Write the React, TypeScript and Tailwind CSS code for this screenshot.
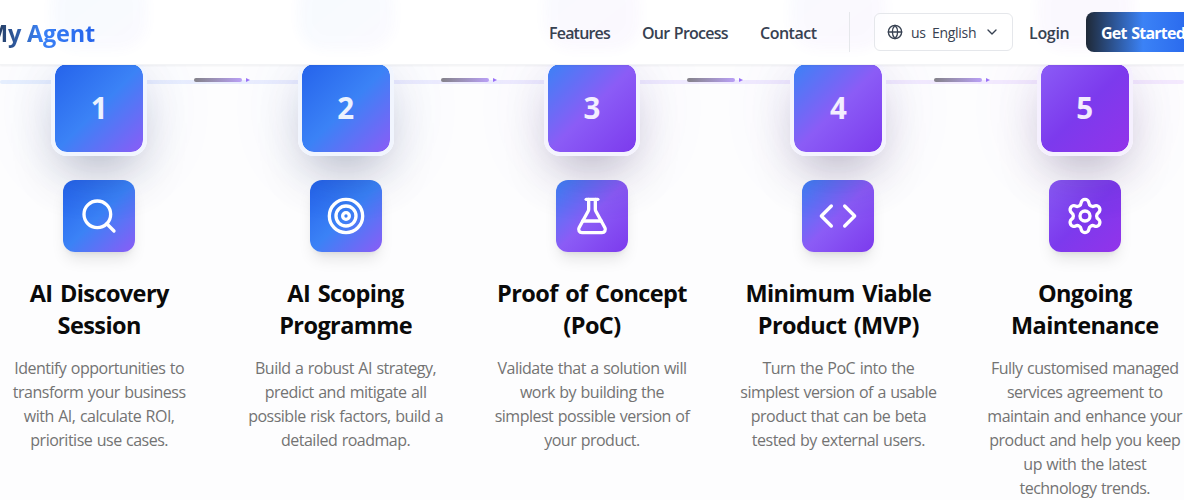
import { Search, Target, FlaskConical, Code, Settings, Globe, ChevronDown } from 'lucide-react';
import type { LucideIcon } from 'lucide-react';

type Step = {
  icon: LucideIcon;
  title: string[];
  text: string[];
  gradient: string;
  border: string;
  halo: string;
};

const steps: Step[] = [
  {
    icon: Search,
    title: ['AI Discovery', 'Session'],
    text: ['Identify opportunities to', 'transform your business', 'with AI, calculate ROI,', 'prioritise use cases.'],
    gradient: 'from-[#2563eb] via-[#3b82f6] to-[#8b5cf6]',
    border: 'border-[#f1f5fe]',
    halo: 'shadow-[0_25px_50px_-12px_rgba(15,23,60,0.3),0_0_80px_0_rgba(59,100,246,0.09)]',
  },
  {
    icon: Target,
    title: ['AI Scoping', 'Programme'],
    text: ['Build a robust AI strategy,', 'predict and mitigate all', 'possible risk factors, build a', 'detailed roadmap.'],
    gradient: 'from-[#2563eb] via-[#3b82f6] to-[#8b5cf6]',
    border: 'border-[#f1f5fe]',
    halo: 'shadow-[0_25px_50px_-12px_rgba(15,23,60,0.3),0_0_80px_0_rgba(59,100,246,0.09)]',
  },
  {
    icon: FlaskConical,
    title: ['Proof of Concept', '(PoC)'],
    text: ['Validate that a solution will', 'work by building the', 'simplest possible version of', 'your product.'],
    gradient: 'from-[#3b82f6] via-[#8b5cf6] to-[#7c3aed]',
    border: 'border-[#f4f3fe]',
    halo: 'shadow-[0_25px_50px_-12px_rgba(30,15,60,0.3),0_0_80px_0_rgba(110,80,246,0.09)]',
  },
  {
    icon: Code,
    title: ['Minimum Viable', 'Product (MVP)'],
    text: ['Turn the PoC into the', 'simplest version of a usable', 'product that can be beta', 'tested by external users.'],
    gradient: 'from-[#3b82f6] via-[#8b5cf6] to-[#7c3aed]',
    border: 'border-[#f4f3fe]',
    halo: 'shadow-[0_25px_50px_-12px_rgba(30,15,60,0.3),0_0_80px_0_rgba(110,80,246,0.09)]',
  },
  {
    icon: Settings,
    title: ['Ongoing', 'Maintenance'],
    text: ['Fully customised managed', 'services agreement to', 'maintain and enhance your', 'product and help you keep', 'up with the latest', 'technology trends.'],
    gradient: 'from-[#8b5cf6] via-[#7c3aed] to-[#9333ea]',
    border: 'border-[#f5f0fe]',
    halo: 'shadow-[0_25px_50px_-12px_rgba(30,15,60,0.3),0_0_80px_0_rgba(140,70,240,0.09)]',
  },
];

function HeaderGlow() {
  return (
    <div className="absolute inset-0 -z-10 grid grid-cols-[repeat(5,198.4px)] gap-12 overflow-hidden">
      {steps.map((step) => (
        <div key={step.title[0]} className="flex justify-center">
          <div className={`-mt-6 h-[74px] w-24 shrink-0 rounded-[28px] bg-linear-to-br/srgb opacity-[0.03] blur-[6px] ${step.gradient}`} />
        </div>
      ))}
    </div>
  );
}

function Header() {
  return (
    <header className="relative z-20 flex h-[65px] items-center border-b border-[#f3f4f6] bg-white shadow-[0_1px_2px_0_rgba(0,0,0,0.05)]">
      <HeaderGlow />
      <div className="flex w-[95px] shrink-0 justify-end pt-[3px]">
        <span className="bg-linear-to-r/srgb from-[#1f2937] via-[#3b82f6] to-[#2563eb] bg-clip-text text-[23.5px] font-bold tracking-[-0.2px] whitespace-nowrap text-transparent">
          My Agent
        </span>
      </div>
      <nav className="ml-[454px] flex shrink-0 items-center gap-8 pt-px text-base font-semibold text-[#374151]">
        <span className="w-[61px] tracking-[-0.8px] whitespace-nowrap">Features</span>
        <span className="w-[86px] tracking-[-0.75px] [word-spacing:1px] whitespace-nowrap">Our Process</span>
        <span className="w-[57px] tracking-[-0.5px] whitespace-nowrap">Contact</span>
      </nav>
      <div className="ml-8 h-10 w-px shrink-0 bg-[#e5e7eb]" />
      <div className="ml-6 flex h-[38px] w-[139px] shrink-0 items-center rounded-md border border-[#e5e7eb] bg-white/60 pl-3 text-sm text-[#374151]">
        <Globe size={16} />
        <span className="ml-2 w-[13px] pt-px tracking-[-0.3px]">us</span>
        <span className="ml-2 w-[44px] pt-px tracking-[-0.3px] whitespace-nowrap">English</span>
        <ChevronDown size={16} className="ml-2" />
      </div>
      <span className="ml-4 w-[41px] shrink-0 pt-px text-base font-semibold tracking-[-0.3px] text-[#374151]">Login</span>
      <div className="ml-4 flex h-10 w-[114px] shrink-0 items-center rounded-lg bg-linear-to-r/srgb from-[#1f2937] via-[#3b82f6] to-[#2563eb] pt-px pl-[15px] text-base font-bold tracking-[-0.75px] [word-spacing:1px] whitespace-nowrap text-white">
        Get Started
      </div>
    </header>
  );
}

function StepColumn({ step, index }: { step: Step; index: number }) {
  const Icon = step.icon;
  return (
    <div className="relative flex flex-col items-center text-center">
      <div className={`relative z-10 flex size-24 items-center justify-center rounded-2xl border-4 bg-linear-to-br/srgb bg-clip-padding text-[29.5px] font-bold text-white/90 ${step.gradient} ${step.border} ${step.halo}`}>
        <span className="pt-px">{index + 1}</span>
      </div>
      {index < 4 && (
        <div className="absolute top-[18px] left-[194.4px] flex items-center gap-1">
          <div className="h-1 w-12 rounded-full bg-linear-to-r from-[#858389] to-[#baa0f6]" />
          <svg width="4" height="4" viewBox="0 0 4 4" fill="#8b5cf6" fillOpacity="0.85">
            <path d="M0 0L4 2L0 4Z" />
          </svg>
        </div>
      )}
      <div className={`mt-6 flex size-[72px] items-center justify-center rounded-xl bg-linear-to-br/srgb text-white shadow-lg ${step.gradient}`}>
        <Icon size={40} strokeWidth={2} className="relative z-20" />
      </div>
      <h3 className="mt-[25px] text-[23.5px] leading-8 font-bold tracking-[-0.6px] [word-spacing:2px] text-[#0a0a0a]">
        {step.title.map((line) => (
          <span key={line} className="block whitespace-nowrap">{line}</span>
        ))}
      </h3>
      <p className="mt-[15px] text-base leading-6 tracking-[-0.5px] [word-spacing:0.8px] text-[#737373]">
        {step.text.map((line) => (
          <span key={line} className="block whitespace-nowrap">{line}</span>
        ))}
      </p>
    </div>
  );
}

export default function App() {
  return (
    <div className="h-[500px] w-[1184px] overflow-hidden bg-[#fdfdfe] font-['Open_Sans','Noto_Sans',sans-serif]">
      <Header />
      <main className="relative -mt-[5px]">
        <div className="absolute top-5 left-0 h-1 w-full rounded-full bg-linear-to-r from-[#e6effe] via-[#eeeafe] to-[#f4eafe]" />
        <div className="grid w-[1184px] grid-cols-[repeat(5,198.4px)] gap-12">
          {steps.map((step, index) => (
            <StepColumn key={step.title[0]} step={step} index={index} />
          ))}
        </div>
      </main>
    </div>
  );
}
